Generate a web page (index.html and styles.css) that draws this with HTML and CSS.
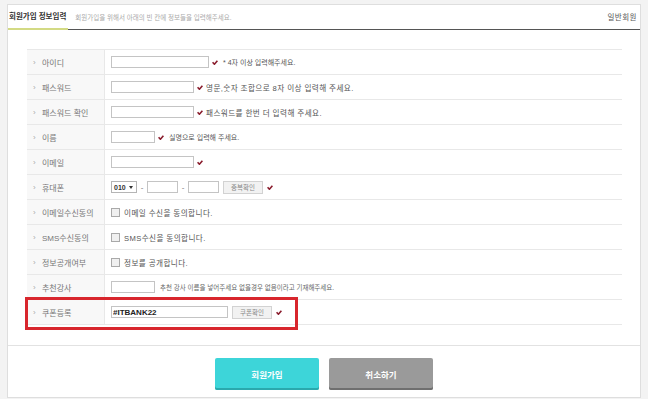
FILE: index.html
```html
<!DOCTYPE html>
<html lang="ko">

<head>
    <meta charset="UTF-8">
    <meta name="viewport" content="width=device-width, initial-scale=1.0">
    <link rel="stylesheet" href="styles.css">
    <title>회원가입</title>
</head>

<body>
    <div class="page">
        <div class="head">
            <h1 class="head_title">회원가입 정보입력</h1>
            <span class="head_desc">회원가입을 위해서 아래의 빈 칸에 정보들을 입력해주세요.</span>
            <span class="head_type">일반회원</span>
        </div>

        <div class="form">
            <div class="table">
                <div class="row">
                    <div class="label">아이디</div>
                    <div class="field">
                        <input class="input w98" type="text">
                        <svg class="chk" width="6" height="5" viewBox="0 0 6 5"><path d="M0.6 2.2 L2.4 4.2 L5.4 0.7" /></svg>
                        <span class="hint small">* 4자 이상 입력해주세요.</span>
                    </div>
                </div>
                <div class="row">
                    <div class="label">패스워드</div>
                    <div class="field">
                        <input class="input w83" type="password">
                        <svg class="chk" width="6" height="5" viewBox="0 0 6 5"><path d="M0.6 2.2 L2.4 4.2 L5.4 0.7" /></svg>
                        <span class="hint wide">영문,숫자 조합으로 8자 이상 입력해 주세요.</span>
                    </div>
                </div>
                <div class="row">
                    <div class="label">패스워드 확인</div>
                    <div class="field">
                        <input class="input w83" type="password">
                        <svg class="chk" width="6" height="5" viewBox="0 0 6 5"><path d="M0.6 2.2 L2.4 4.2 L5.4 0.7" /></svg>
                        <span class="hint wide">패스워드를 한번 더 입력해 주세요.</span>
                    </div>
                </div>
                <div class="row">
                    <div class="label">이름</div>
                    <div class="field">
                        <input class="input w44" type="text">
                        <svg class="chk" width="6" height="5" viewBox="0 0 6 5"><path d="M0.6 2.2 L2.4 4.2 L5.4 0.7" /></svg>
                        <span class="hint small">실명으로 입력해 주세요.</span>
                    </div>
                </div>
                <div class="row">
                    <div class="label">이메일</div>
                    <div class="field">
                        <input class="input w83" type="text">
                        <svg class="chk" width="6" height="5" viewBox="0 0 6 5"><path d="M0.6 2.2 L2.4 4.2 L5.4 0.7" /></svg>
                    </div>
                </div>
                <div class="row">
                    <div class="label">휴대폰</div>
                    <div class="field">
                        <div class="select">010 <span class="arrow"></span></div>
                        <span class="dash">-</span>
                        <input class="input w31" type="text">
                        <span class="dash">-</span>
                        <input class="input w31" type="text">
                        <button class="btn_small" type="button">중복확인</button>
                        <svg class="chk" width="6" height="5" viewBox="0 0 6 5"><path d="M0.6 2.2 L2.4 4.2 L5.4 0.7" /></svg>
                    </div>
                </div>
                <div class="row">
                    <div class="label">이메일수신동의</div>
                    <div class="field">
                        <span class="box"></span>
                        <span class="hint wide">이메일 수신을 동의합니다.</span>
                    </div>
                </div>
                <div class="row">
                    <div class="label">SMS수신동의</div>
                    <div class="field">
                        <span class="box"></span>
                        <span class="hint wide">SMS수신을 동의합니다.</span>
                    </div>
                </div>
                <div class="row">
                    <div class="label">정보공개여부</div>
                    <div class="field">
                        <span class="box"></span>
                        <span class="hint wide">정보를 공개합니다.</span>
                    </div>
                </div>
                <div class="row">
                    <div class="label">추천강사</div>
                    <div class="field">
                        <input class="input w44" type="text">
                        <span class="hint tiny">추천 강사 이름을 넣어주세요 없을경우 없음이라고 기재해주세요.</span>
                    </div>
                </div>
                <div class="row coupon">
                    <div class="label">쿠폰등록</div>
                    <div class="field">
                        <input class="input w117 filled" type="text" value="#ITBANK22">
                        <button class="btn_small" type="button">쿠폰확인</button>
                        <svg class="chk" width="6" height="5" viewBox="0 0 6 5"><path d="M0.6 2.2 L2.4 4.2 L5.4 0.7" /></svg>
                    </div>
                    <div class="mark"></div>
                </div>
            </div>
        </div>

        <div class="buttons">
            <button class="button join" type="button">회원가입</button>
            <button class="button cancel" type="button">취소하기</button>
        </div>
    </div>
</body>

</html>
```

FILE: styles.css
```css
body {
    margin: 0;
    background-color: #f3f3f3;
    font-family: "Liberation Sans", "Noto Sans CJK KR", sans-serif;
}

.page {
    width: 632px;
    margin: 4px 7px 0 7px;
    background-color: #fff;
    border: 1px solid #dedede;
}

/* header */
.head {
    display: flex;
    align-items: flex-end;
    height: 24px;
    border-bottom: 1px solid #555;
}

.head_title {
    margin: 0 0 -1px 0;
    padding: 0 2px 6px 1px;
    font-size: 7.5px;
    line-height: 10px;
    font-weight: bold;
    color: #333;
    border-bottom: 2px solid #d3da84;
}

.head_desc {
    margin-left: 7px;
    padding-bottom: 6px;
    font-size: 6.5px;
    line-height: 10px;
    color: #aaa;
}

.head_type {
    margin-left: auto;
    padding: 0 3px 6px 0;
    font-size: 7.5px;
    line-height: 10px;
    color: #555;
    letter-spacing: 0.5px;
}

/* form */
.form {
    padding: 19px 0 20px 19px;
    border-bottom: 1px solid #e2e2e2;
}

.table {
    width: 595px;
    border-top: 1px solid #e8e8e8;
}

.row {
    display: grid;
    grid-template-columns: 78px 1fr;
    height: 25px;
    box-sizing: border-box;
    border-bottom: 1px solid #e8e8e8;
}

.label {
    display: flex;
    align-items: center;
    padding-left: 6px;
    background-color: #f8f8f8;
    border-right: 1px solid #e8e8e8;
    font-size: 8px;
    color: #777;
}

.label::before {
    content: "›";
    width: 9px;
    font-size: 8px;
    color: #aaa;
}

.field {
    display: flex;
    align-items: center;
    gap: 3px;
    padding-left: 6px;
}

.input {
    height: 12px;
    box-sizing: border-box;
    margin: 0;
    padding: 0 2px;
    border: 1px solid #c4c4c4;
    background-color: #fff;
    font-family: "Liberation Sans", "Noto Sans CJK KR", sans-serif;
    font-size: 8px;
    color: #111;
}

.w98 { width: 98px; }
.w83 { width: 83px; }
.w44 { width: 44px; }
.w31 { width: 31px; }
.w117 { width: 117px; }

.filled {
    font-weight: bold;
    padding-left: 1px;
    color: #222;
}

.chk {
    flex: none;
}

.chk path {
    fill: none;
    stroke: #8a1d2d;
    stroke-width: 1.6;
}

.hint {
    color: #555;
    white-space: nowrap;
}

.small {
    margin-left: 2px;
    font-size: 7px;
}

.wide {
    font-size: 7.6px;
    letter-spacing: 0.4px;
}

.tiny {
    margin-left: 2px;
    font-size: 6.5px;
    color: #666;
}

.select {
    display: flex;
    align-items: center;
    gap: 3px;
    width: 26px;
    height: 12px;
    box-sizing: border-box;
    padding-left: 2px;
    border: 1px solid #b5b5b5;
    font-size: 7px;
    font-weight: bold;
    color: #333;
}

.arrow {
    width: 0;
    height: 0;
    border-left: 2px solid transparent;
    border-right: 2px solid transparent;
    border-top: 3px solid #333;
}

.dash {
    width: 4px;
    text-align: center;
    font-size: 8px;
    color: #777;
}

.btn_small {
    width: 40px;
    height: 13px;
    margin: 0 1px 0 1px;
    padding: 0;
    border: 1px solid #d2d2d2;
    background-color: #f2f2f2;
    font-family: "Liberation Sans", "Noto Sans CJK KR", sans-serif;
    font-size: 6.5px;
    color: #888;
}

.box {
    width: 7px;
    height: 7px;
    margin-right: 1px;
    border: 1px solid #a9a9a9;
    background-color: #f0f0f0;
}

.coupon {
    position: relative;
}

.mark {
    position: absolute;
    left: -2px;
    top: -3px;
    width: 273px;
    height: 33px;
    box-sizing: border-box;
    border: 3px solid #d8262d;
}

/* buttons */
.buttons {
    display: flex;
    justify-content: center;
    gap: 10px;
    padding: 12px 0 7px 0;
}

.button {
    width: 104px;
    height: 32px;
    border: 0;
    border-radius: 2px;
    font-family: "Liberation Sans", "Noto Sans CJK KR", sans-serif;
    font-size: 8.5px;
    font-weight: bold;
    color: #fff;
}

.join {
    background-color: #3dd5d9;
    box-shadow: inset 0 -2px 0 #2aa9ad;
}

.cancel {
    background-color: #9a9a9a;
    box-shadow: inset 0 -2px 0 #6f6f6f;
}
```
